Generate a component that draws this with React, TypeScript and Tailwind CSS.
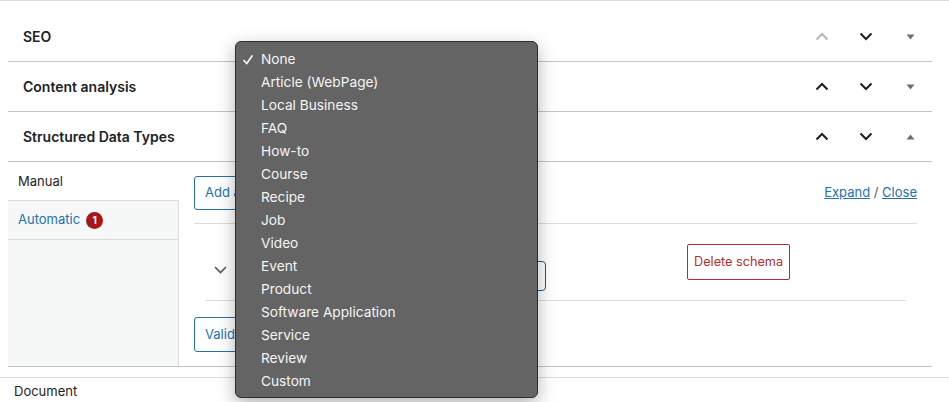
import React from "react";

const items = [
  "None",
  "Article (WebPage)",
  "Local Business",
  "FAQ",
  "How-to",
  "Course",
  "Recipe",
  "Job",
  "Video",
  "Event",
  "Product",
  "Software Application",
  "Service",
  "Review",
  "Custom",
];

function ChevUp({ light }: { light?: boolean }) {
  return (
    <svg width="14" height="9" viewBox="0 0 14 9" fill="none">
      <path d="M1.5 7.5 L7 2 L12.5 7.5" stroke={light ? "#b5b7ba" : "#1e1e1e"} strokeWidth="2" />
    </svg>
  );
}
function ChevDown() {
  return (
    <svg width="14" height="9" viewBox="0 0 14 9" fill="none">
      <path d="M1.5 1.5 L7 7 L12.5 1.5" stroke="#1e1e1e" strokeWidth="2" />
    </svg>
  );
}
function Tri({ up }: { up?: boolean }) {
  return (
    <svg width="9" height="6" viewBox="0 0 9 6">
      {up ? <path d="M0.5 5.5 L4.5 0.5 L8.5 5.5 Z" fill="#6b6e72" /> : <path d="M0.5 0.5 L4.5 5.5 L8.5 0.5 Z" fill="#6b6e72" />}
    </svg>
  );
}

function Header({ title, upLight, open }: { title: string; upLight?: boolean; open?: boolean }) {
  return (
    <div className="h-[50px] border-b border-[#c3c4c7] flex items-center">
      <div className="pl-[15px] flex-1 text-[14px] font-semibold text-[#1d2327]">{title}</div>
      <div className="flex items-center">
        <div className="w-[44px] flex justify-center">
          <ChevUp light={upLight} />
        </div>
        <div className="w-[44px] flex justify-center">
          <ChevDown />
        </div>
        <div className="w-[44px] flex justify-center">
          <Tri up={open} />
        </div>
      </div>
    </div>
  );
}

export default function App() {
  return (
    <div className="relative w-[949px] h-[402px] overflow-hidden bg-white font-['Inter',sans-serif] text-[#1d2327]">
      <div className="h-[12px] border-t border-[#dcdcde]" />
      <div className="mx-[8px] w-[924px]">
        <Header title="SEO" upLight />
        <Header title="Content analysis" />
        <Header title="Structured Data Types" open />
        <div className="h-[205px] border-b border-[#c3c4c7] flex">
          <div className="w-[171px] flex flex-col">
            <div className="h-[38px] bg-white pl-[10px] pt-[1px] flex items-center text-[13px] text-[#1d2327]">Manual</div>
            <div className="flex-1 bg-[#f6f7f7] border-r border-t border-[#dcdcde]">
              <div className="h-[39px] border-b border-[#dcdcde] pl-[10px] flex items-center gap-[6px]">
                <span className="text-[13px] text-[#2271b1]">Automatic</span>
                <span className="w-[17px] h-[17px] rounded-full bg-[#a31919] text-white text-[10px] font-bold flex items-center justify-center">1</span>
              </div>
            </div>
          </div>
          <div className="flex-1 pl-[15px] pr-[15px] flex flex-col">
            <div className="h-[62px] border-b border-[#dcdcde] flex items-center justify-between">
              <button className="h-[34px] px-[10px] border border-[#2271b1] rounded-[3px] text-[13px] text-[#2271b1] bg-white">Add a new schema</button>
              <div className="text-[13px] text-[#50575e]">
                <span className="underline text-[#2271b1]">Expand</span> / <span className="underline text-[#2271b1]">Close</span>
              </div>
            </div>
            <div className="mx-[11px] h-[77px] border-b border-[#dcdcde] flex items-start">
              <div className="w-[30px] mt-[42px] flex justify-center">
                <svg width="13" height="8" viewBox="0 0 13 8" fill="none">
                  <path d="M1 1 L6.5 6.5 L12 1" stroke="#50575e" strokeWidth="1.6" />
                </svg>
              </div>
              <div className="ml-[16px] mt-[37px] w-[295px] h-[30px] border-[1.5px] border-[#135e96] rounded-[4px] bg-white" />
              <button className="ml-[141px] mt-[20px] h-[36px] px-[6px] border border-[#b32d2e] rounded-[2px] text-[12.7px] text-[#b32d2e] bg-white">Delete schema</button>
            </div>
            <div className="pt-[16px]">
              <button className="h-[35px] px-[10px] border border-[#2271b1] rounded-[3px] text-[13px] text-[#2271b1] bg-white">Validate</button>
            </div>
          </div>
        </div>
      </div>
      <div className="mt-[10px] border-t border-[#dcdcde] h-[30px] pl-[14px] pt-[4px] text-[13px] text-[#1d2327]">Document</div>

      <div className="absolute left-[235px] top-[41px] w-[303px] h-[357px] rounded-[6px] bg-[#646464] border border-[#2e2e2e] shadow-[0_6px_18px_rgba(0,0,0,0.3)] pt-[6px]">
        {items.map((it, i) => (
          <div key={it} className="relative h-[23px] pl-[25px] flex items-center text-[13.7px] text-[#f4f4f4]">
            {i === 0 && (
              <svg className="absolute left-[7px] top-[7px]" width="10" height="10" viewBox="0 0 10 10" fill="none">
                <path d="M1 5.5 L3.8 8.6 L9 1" stroke="#f4f4f4" strokeWidth="1.7" strokeLinecap="round" strokeLinejoin="round" />
              </svg>
            )}
            {it}
          </div>
        ))}
      </div>
    </div>
  );
}
